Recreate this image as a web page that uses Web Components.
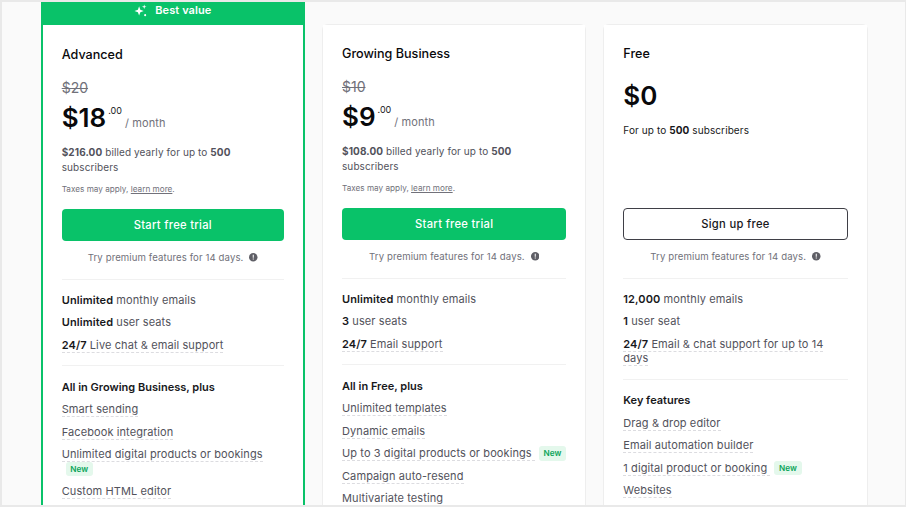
<!DOCTYPE html>
<html>
<head>
<meta charset="utf-8">
<title>Pricing</title>
<style>
  html, body { margin: 0; height: 100%; overflow: hidden; }
  body { font-family: Inter, "Liberation Sans", sans-serif; color: #09090b; }
</style>
</head>
<body>
<template id="plan-grid-tpl">
  <style>
    :host {
      display: block;
      box-sizing: border-box;
      width: 906px;
      height: 507px;
      overflow: hidden;
      border: solid #e9e9e9;
      border-width: 2px 1px 2px 2px;
      background: #fafafa;
    }
    .grid {
      display: grid;
      grid-template-columns: 264.3px 264.3px 264.3px;
      column-gap: 17px;
      padding-left: 38.7px;
      align-items: start;
    }
  </style>
  <div class="grid"><slot></slot></div>
</template>

<template id="plan-card-tpl">
  <style>
    :host {
      display: block;
      box-sizing: border-box;
      margin-top: 22px;
      background: #fff;
      border: 1px solid #eeeeee;
      border-radius: 6px;
      color: #09090b;
    }
    :host([featured]) {
      margin-top: 0;
      border: 0;
      border-radius: 0;
      background: #09c269;
    }
    .banner {
      display: none;
      height: 23px;
      padding-bottom: 7px;
      box-sizing: border-box;
      align-items: center;
      justify-content: center;
      gap: 8px;
      color: #fff;
      font-size: 11px;
      font-weight: 600;
      letter-spacing: .1px;
    }
    .banner svg { width: 13px; height: 13px; }
    :host([featured]) .banner { display: flex; }
    .body {
      padding: 20px 19px 60px;
      background: #fff;
    }
    :host([featured]) .body {
      border: solid #09c269;
      border-width: 0 2px;
      padding: 21px 19px 60px;
    }
    .name { font-size: 12.6px; font-weight: 500; line-height: 18px; }
    .old {
      margin-top: 14px;
      height: 20px;
      font-size: 14px;
      line-height: 20px;
      color: #71717a;
      text-decoration: line-through;
    }
    :host([free]) .old { display: none; }
    .price { display: flex; align-items: flex-start; height: 40px; }
    :host([free]) .price { margin-top: 13px; }
    .amount { font-size: 26px; font-weight: 600; line-height: 40px; }
    .cents { font-size: 9px; margin: 7px 0 0 2px; line-height: 12px; color: #18181b; }
    .per { font-size: 11px; letter-spacing: .1px; color: #71717a; margin: 17px 0 0 3px; line-height: 16px; }
    .billed { margin-top: 7px; line-height: 14.6px; height: 29.2px; font-size: 10px; letter-spacing: .1px; color: #52525b; }
    .billed b { color: #18181b; font-weight: 600; }
    :host([free]) .billed { color: #18181b; }
    .tax { margin-top: 8px; height: 14px; line-height: 14px; font-size: 8.2px; color: #71717a; }
    :host([free]) .tax { margin-top: 29px; }
    .tax u { text-underline-offset: 1px; }
    .cta {
      box-sizing: border-box;
      height: 32px;
      margin-top: 13px;
      display: flex;
      align-items: center;
      justify-content: center;
      background: #09c269;
      border-radius: 4px;
      color: #fff;
      font-size: 11.2px;
      font-weight: 500;
      letter-spacing: .3px;
    }
    :host([free]) .cta {
      background: #fff;
      border: 1px solid #3f3f46;
      color: #18181b;
    }
    .try {
      display: flex;
      align-items: center;
      justify-content: center;
      gap: 6px;
      margin-top: 9px;
      height: 15px;
      font-size: 9.6px;
      letter-spacing: .1px;
      color: #71717a;
    }
    .try svg { width: 8.5px; height: 8.5px; }
    hr { border: 0; border-top: 1px solid #f1f1f1; margin: 9.4px 0 9.6px; }
    hr.first { margin: 13.5px 0 9px; }
    .group { display: flex; flex-direction: column; }
  </style>
  <div class="banner">
    <svg viewBox="0 0 14 14" fill="#fff"><path d="M5.5 2.5 6.8 6.2 10.5 7.5 6.8 8.8 5.5 12.5 4.2 8.8.5 7.5 4.2 6.2Z"/><path d="M11 .5 11.6 2.4 13.5 3 11.6 3.6 11 5.5 10.4 3.6 8.5 3 10.4 2.4Z"/><circle cx="12" cy="12" r="1.1"/></svg>
    Best value
  </div>
  <div class="body">
    <div class="name"></div>
    <div class="old"></div>
    <div class="price">
      <span class="amount"></span><span class="cents"></span><span class="per"></span>
    </div>
    <div class="billed"><slot name="billed"></slot></div>
    <div class="tax"><slot name="tax"></slot></div>
    <div class="cta"></div>
    <div class="try">Try premium features for 14 days.
      <svg viewBox="0 0 10 10"><circle cx="5" cy="5" r="5" fill="#5f5f66"/><rect x="4.4" y="2" width="1.2" height="3.6" fill="#fff"/><rect x="4.4" y="6.4" width="1.2" height="1.3" fill="#fff"/></svg>
    </div>
    <hr class="first">
    <div class="group"><slot name="limits"></slot></div>
    <hr>
    <div class="group"><slot name="features"></slot></div>
  </div>
</template>

<template id="feature-row-tpl">
  <style>
    :host {
      display: block;
      padding: 4px 0;
      line-height: 14.4px;
      font-size: 11px;
      letter-spacing: .1px;
      color: #52525b;
    }
    :host([head]) { color: #18181b; font-weight: 600; letter-spacing: 0; }
    .tip { border-bottom: 1px dashed #dcdce0; }
    :host([plain]) .tip { border-bottom: 0; }
    ::slotted(b) { color: #18181b; font-weight: 600; }
  </style>
  <span class="tip"><slot></slot></span><slot name="after"></slot>
</template>

<template id="new-badge-tpl">
  <style>
    :host {
      display: inline-block;
      box-sizing: border-box;
      height: 14.4px;
      line-height: 14.4px;
      padding: 0 4.5px;
      margin-left: 4px;
      border-radius: 3px;
      background: #e4f8ec;
      color: #0aa45a;
      font-size: 8.2px;
      font-weight: 600;
      vertical-align: top;
    }
  </style>
  <slot></slot>
</template>

<plan-grid>
  <plan-card featured name="Advanced" old="$20" amount="$18" cents=".00" per="/ month" cta="Start free trial">
    <span slot="billed"><b>$216.00</b> billed yearly for up to <b>500</b> subscribers</span>
    <span slot="tax">Taxes may apply, <u>learn more</u>.</span>
    <feature-row slot="limits" plain><b>Unlimited</b> monthly emails</feature-row>
    <feature-row slot="limits" plain><b>Unlimited</b> user seats</feature-row>
    <feature-row slot="limits"><b>24/7</b> Live chat &amp; email support</feature-row>
    <feature-row slot="features" head plain>All in Growing Business, plus</feature-row>
    <feature-row slot="features">Smart sending</feature-row>
    <feature-row slot="features">Facebook integration</feature-row>
    <feature-row slot="features">Unlimited digital products or bookings <new-badge slot="after">New</new-badge></feature-row>
    <feature-row slot="features">Custom HTML editor</feature-row>
  </plan-card>
  <plan-card name="Growing Business" old="$10" amount="$9" cents=".00" per="/ month" cta="Start free trial">
    <span slot="billed"><b>$108.00</b> billed yearly for up to <b>500</b> subscribers</span>
    <span slot="tax">Taxes may apply, <u>learn more</u>.</span>
    <feature-row slot="limits" plain><b>Unlimited</b> monthly emails</feature-row>
    <feature-row slot="limits" plain><b>3</b> user seats</feature-row>
    <feature-row slot="limits"><b>24/7</b> Email support</feature-row>
    <feature-row slot="features" head plain>All in Free, plus</feature-row>
    <feature-row slot="features">Unlimited templates</feature-row>
    <feature-row slot="features">Dynamic emails</feature-row>
    <feature-row slot="features">Up to 3 digital products or bookings <new-badge slot="after">New</new-badge></feature-row>
    <feature-row slot="features">Campaign auto-resend</feature-row>
    <feature-row slot="features">Multivariate testing</feature-row>
  </plan-card>
  <plan-card free name="Free" amount="$0" cta="Sign up free">
    <span slot="billed">For up to <b>500</b> subscribers</span>
    <feature-row slot="limits" plain><b>12,000</b> monthly emails</feature-row>
    <feature-row slot="limits" plain><b>1</b> user seat</feature-row>
    <feature-row slot="limits"><b>24/7</b> Email &amp; chat support for up to 14 days</feature-row>
    <feature-row slot="features" head plain>Key features</feature-row>
    <feature-row slot="features">Drag &amp; drop editor</feature-row>
    <feature-row slot="features">Email automation builder</feature-row>
    <feature-row slot="features">1 digital product or booking <new-badge slot="after">New</new-badge></feature-row>
    <feature-row slot="features">Websites</feature-row>
  </plan-card>
</plan-grid>

<script>
  // shared helper: shadow root from a template
  function mount(el, id) {
    const root = el.attachShadow({ mode: 'open' });
    root.appendChild(document.getElementById(id).content.cloneNode(true));
    return root;
  }

  class PlanGrid extends HTMLElement {
    constructor() { super(); mount(this, 'plan-grid-tpl'); }
  }

  class PlanCard extends HTMLElement {
    constructor() { super(); mount(this, 'plan-card-tpl'); }
    connectedCallback() {
      const map = { name: '.name', old: '.old', amount: '.amount', cents: '.cents', per: '.per', cta: '.cta' };
      Object.keys(map).forEach(k => {
        this.shadowRoot.querySelector(map[k]).textContent = this.getAttribute(k) || '';
      });
    }
  }

  class FeatureRow extends HTMLElement {
    constructor() { super(); mount(this, 'feature-row-tpl'); }
  }

  class NewBadge extends HTMLElement {
    constructor() { super(); mount(this, 'new-badge-tpl'); }
  }

  customElements.define('plan-grid', PlanGrid);
  customElements.define('plan-card', PlanCard);
  customElements.define('feature-row', FeatureRow);
  customElements.define('new-badge', NewBadge);
</script>
</body>
</html>
